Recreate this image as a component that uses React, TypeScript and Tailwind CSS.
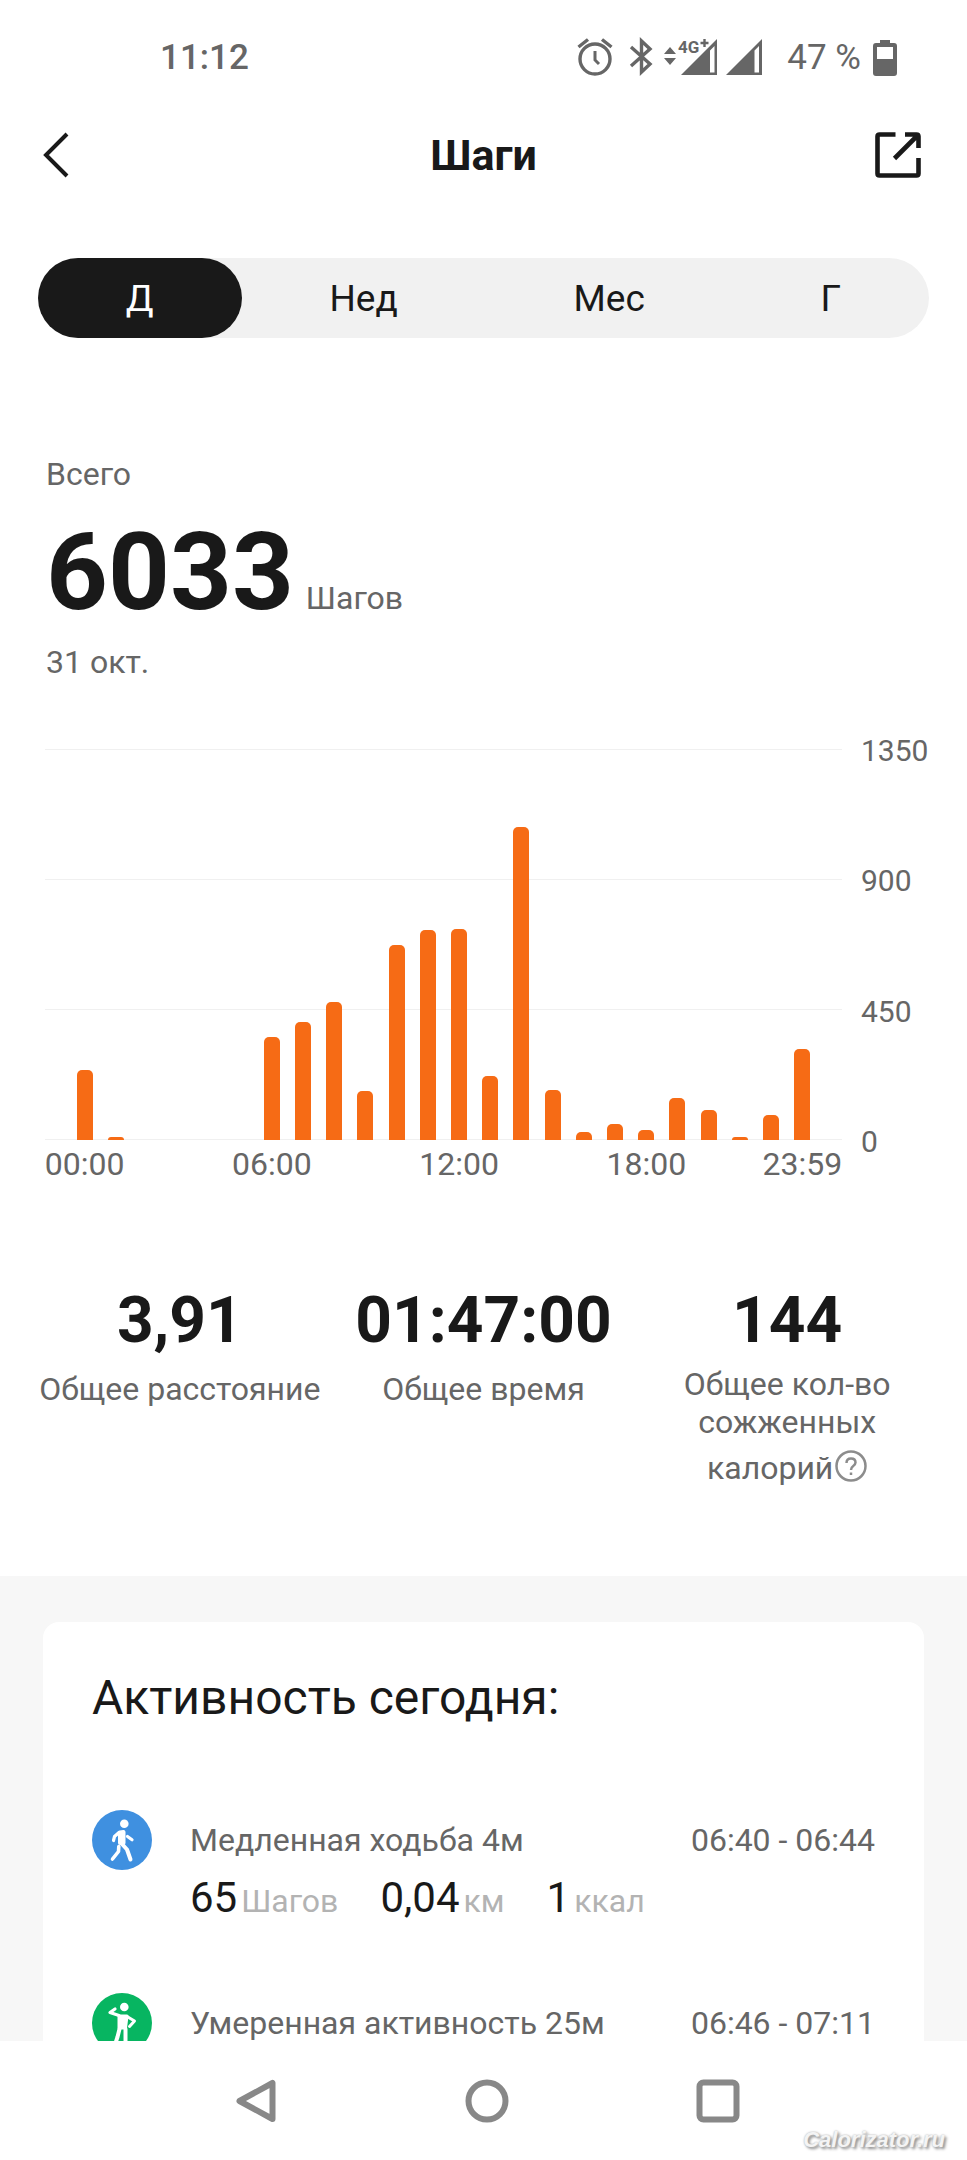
import { useState } from "react";

const steps = [
  242, 10, 0, 0, 0, 0, 357, 409, 478, 170, 672, 724, 727, 222, 1080, 173, 28,
  55, 33, 145, 104, 10, 87, 315,
];

const maxSteps = 1350;

const hourLabels: Record<number, string> = {
  0: "00:00",
  6: "06:00",
  12: "12:00",
  18: "18:00",
  23: "23:59",
};

const periods = ["Д", "Нед", "Мес", "Г"];

const activities = [
  {
    title: "Медленная ходьба 4м",
    time: "06:40 - 06:44",
    icon: <WalkIcon />,
    values: [
      { value: "65", unit: "Шагов" },
      { value: "0,04", unit: "км" },
      { value: "1", unit: "ккал" },
    ],
  },
  {
    title: "Умеренная активность 25м",
    time: "06:46 - 07:11",
    icon: <ActiveIcon />,
    values: [],
  },
];

function WalkIcon() {
  return (
    <svg viewBox="0 0 60 60" className="size-15 shrink-0" fill="none" stroke="#fff" strokeLinecap="round" strokeLinejoin="round">
      <circle cx="30" cy="30" r="30" fill="#3f90e0" stroke="none" />
      <circle cx="32.3" cy="13.7" r="4.3" fill="#fff" stroke="none" />
      <path d="M28 22.5 L31.5 22 L31.5 33 L28 33 Z" fill="#fff" strokeWidth="4" />
      <path d="M27 22.5 L22.5 26.5 L21.5 30.5" strokeWidth="3.2" />
      <path d="M35.5 26.5 L40 29.7" strokeWidth="3.2" />
      <path d="M30 34 L35 39.5 L38.5 49.5" strokeWidth="4" />
      <path d="M26.8 36.5 L26.5 41.5 L20.5 49" strokeWidth="3.6" />
    </svg>
  );
}

function ActiveIcon() {
  return (
    <svg viewBox="0 0 60 60" className="size-15 shrink-0" fill="none" stroke="#fff" strokeLinecap="round" strokeLinejoin="round">
      <circle cx="30" cy="30" r="30" fill="#07b561" stroke="none" />
      <circle cx="32.3" cy="14" r="4.3" fill="#fff" stroke="none" />
      <path d="M23 16 L18 19.5 L27 22.5" strokeWidth="3.2" />
      <path d="M27 23 L35 23 L33.5 35 L27 35 Z" fill="#fff" strokeWidth="3" />
      <path d="M35 23.5 L42.5 28 L37.5 33.5" strokeWidth="3" />
      <path d="M27.5 36 L25.5 44 L22.5 53" strokeWidth="4" />
      <path d="M33.5 36 L33.5 53" strokeWidth="4" />
    </svg>
  );
}

function StatusIcons() {
  return (
    <svg viewBox="0 -10 210 60" className="h-15 w-[210px]" fill="none" stroke="#666">
      {/* alarm */}
      <circle cx="18" cy="21" r="15" strokeWidth="3.4" />
      <path d="M18 13v9l4 4" strokeWidth="3" />
      <path d="M1.5 9 L11 1.5 M25 1.5 L34.5 9" strokeWidth="3.4" />
      {/* bluetooth */}
      <path d="M54 9 L73 26 L64.5 34 V3 L73 11 L54 28" strokeWidth="3.4" />
      {/* data arrows */}
      <path d="M87 16 L93 9 L99 16 Z M87 20 L93 27 L99 20 Z" fill="#666" stroke="none" />
      {/* signal */}
      <path
        d="M104 37 L140 1 V37 Z M133 12.5 V34.5 H137.5 V8 Z"
        fill="#666"
        fillRule="evenodd"
        stroke="none"
      />
      <path
        d="M149 37 L185 1 V37 Z M177.5 12.5 V34.5 H182 V8 Z"
        fill="#666"
        fillRule="evenodd"
        stroke="none"
      />
      <path d="M101 0 H131 V6 L123 15.5 H101 Z" fill="#fff" stroke="none" />
      <text x="101" y="15" fontSize="17" fontWeight="700" fill="#666" stroke="none">
        4G
      </text>
      <path d="M123.5 5 H131.5 M127.5 1 V9" strokeWidth="2.4" />
    </svg>
  );
}

function StatusBar() {
  return (
    <div className="flex h-[116px] shrink-0 items-center justify-between pr-[70px] pl-40 text-[35px] font-medium text-[#666]">
      <span>11:12</span>
      <div className="flex items-center">
        <StatusIcons />
        <span className="font-normal">47 %</span>
        <svg viewBox="0 0 24 36" className="ml-3 h-9 w-6" fill="#666">
          <path d="M7 0H17V3H21Q24 3 24 6V33Q24 36 21 36H3Q0 36 0 33V6Q0 3 3 3H7Z" />
          <rect x="4" y="7" width="16" height="12" fill="#fff" />
        </svg>
      </div>
    </div>
  );
}

function Header() {
  return (
    <header className="flex h-[78px] shrink-0 items-center justify-between px-[42px]">
      <button type="button" aria-label="Назад" className="w-12">
        <svg viewBox="0 0 28 46" className="h-[46px] w-7" fill="none" stroke="#191919" strokeWidth="4">
          <path d="M25 2 L4 23 L25 44" />
        </svg>
      </button>
      <h1 className="text-[43px] font-bold">Шаги</h1>
      <button type="button" aria-label="Поделиться" className="flex w-12 justify-end pr-1">
        <svg viewBox="0 0 46 46" className="size-[46px] shrink-0" fill="none" stroke="#191919" strokeWidth="4.6">
          <path d="M20.5 2.5 H4.5 Q2.5 2.5 2.5 4.5 V41.5 Q2.5 43.5 4.5 43.5 H41.5 Q43.5 43.5 43.5 41.5 V26" />
          <path d="M30 2.5 H41.5 Q43.5 2.5 43.5 4.5 V16 M42.5 3.5 L19.5 26.5" />
        </svg>
      </button>
    </header>
  );
}

function StepsChart() {
  return (
    <div className="mt-[63px] flex pl-[45px]">
      <div className="flex-1">
        <div className="relative h-[391px]">
          <div className="flex h-full flex-col justify-between">
            {[0, 1, 2, 3].map((line) => (
              <div key={line} className="h-px bg-[#f0f0f0]" />
            ))}
          </div>
          <div className="absolute inset-0 flex items-end px-6">
            {steps.map((value, hour) => (
              <div key={hour} className="flex h-full flex-1 items-end justify-center">
                <div
                  className="w-4 rounded-t-[5px] bg-[#f66b15]"
                  style={{ height: `${(value / maxSteps) * 100}%` }}
                />
              </div>
            ))}
          </div>
        </div>
        <div className="flex h-12 px-6 text-[32px] text-[#666]">
          {steps.map((_, hour) => (
            <div key={hour} className="flex w-0 flex-1 justify-center">
              <span>{hourLabels[hour]}</span>
            </div>
          ))}
        </div>
      </div>
      <div className="-mt-3.5 flex h-[423px] w-[125px] flex-col justify-between pl-[19px] text-[30px] leading-8 text-[#666]">
        <span>1350</span>
        <span>900</span>
        <span>450</span>
        <span>0</span>
      </div>
    </div>
  );
}

function Totals() {
  return (
    <div className="mt-[93px] grid grid-cols-3 px-7 text-center">
      <div>
        <p className="text-[64px] leading-20 font-bold">3,91</p>
        <p className="mt-2 text-[32px] leading-10 whitespace-nowrap text-[#666]">Общее расстояние</p>
      </div>
      <div>
        <p className="text-[64px] leading-20 font-bold">01:47:00</p>
        <p className="mt-2 text-[32px] leading-10 text-[#666]">Общее время</p>
      </div>
      <div>
        <p className="text-[64px] leading-20 font-bold">144</p>
        <div className="mt-1 text-[32px] leading-[38px] text-[#666]">
          <p>Общее кол-во сожженных</p>
          <div className="flex items-center justify-center pt-1">
            <span className="pt-1">калорий</span>
            <button type="button" aria-label="Подробнее" className="ml-0.5">
              <svg viewBox="0 0 32 32" className="size-8" fill="none" stroke="#8c8c8c" strokeWidth="2.5">
                <circle cx="16" cy="16" r="14.5" />
                <path d="M11.5 13 Q11.5 8.5 16 8.5 Q20.5 8.5 20.5 12.5 Q20.5 14.5 18 16.2 Q16 17.5 16 20" />
                <path d="M16 22.5 V25" />
              </svg>
            </button>
          </div>
        </div>
      </div>
    </div>
  );
}

function ActivityList() {
  return (
    <section className="mt-[89px] bg-[#f7f7f7] px-[43px] pt-[46px]">
      <div className="rounded-2xl bg-white px-[49px] pt-12">
        <h2 className="text-[48px] leading-14">Активность сегодня:</h2>
        <ul className="mt-21">
          {activities.map((item) => (
            <li key={item.title} className="flex h-[183px] items-start">
              {item.icon}
              <div className="ml-[38px] flex-1">
                <div className="flex h-15 items-center justify-between text-[32px] text-[#666]">
                  <span>{item.title}</span>
                  <span>{item.time}</span>
                </div>
                <div className="flex gap-[42px]">
                  {item.values.map((v) => (
                    <p key={v.unit} className="flex items-baseline gap-1">
                      <span className="text-[42px] leading-14">{v.value}</span>
                      <span className="text-[32px] text-[#b3b3b3]">{v.unit}</span>
                    </p>
                  ))}
                </div>
              </div>
            </li>
          ))}
        </ul>
      </div>
    </section>
  );
}

function NavBar() {
  return (
    <nav className="relative flex h-[119px] shrink-0 items-center justify-between bg-white pr-[227px] pl-[234px]">
      <button type="button" aria-label="Назад">
        <svg viewBox="0 0 44 44" className="size-11" fill="none" stroke="#888" strokeWidth="6" strokeLinejoin="round">
          <path d="M5.5 22 L38.5 4 V40 Z" />
        </svg>
      </button>
      <button type="button" aria-label="Домой">
        <svg viewBox="0 0 44 44" className="size-11" fill="none" stroke="#888" strokeWidth="6">
          <circle cx="22" cy="22" r="18.5" />
        </svg>
      </button>
      <button type="button" aria-label="Недавние">
        <svg viewBox="0 0 44 44" className="size-11" fill="none" stroke="#888" strokeWidth="6">
          <rect x="3.5" y="3.5" width="37" height="37" rx="4" />
        </svg>
      </button>
      <span className="absolute right-[22px] bottom-1 font-['Liberation_Sans',sans-serif] text-[22px] font-bold text-[#f4f4f4] italic [text-shadow:0_0_2px_#aaa,2px_2px_3px_#888]">
        Calorizator.ru
      </span>
    </nav>
  );
}

export default function App() {
  const [period, setPeriod] = useState("Д");

  return (
    <div className="flex h-screen flex-col bg-white font-[Roboto,sans-serif] text-[#191919]">
      <StatusBar />
      <Header />

      <main className="flex-1 overflow-y-auto [scrollbar-width:none]">
        {/* PERIOD */}
        <div className="mx-[38px] mt-16 flex h-20 rounded-full bg-[#f1f1f1]">
          {periods.map((p) => (
            <button
              key={p}
              type="button"
              onClick={() => setPeriod(p)}
              className={`flex-auto rounded-full pt-0.5 text-[37px] ${
                period === p ? "bg-[#191919] text-white" : ""
              }`}
            >
              {p}
            </button>
          ))}
        </div>

        {/* SUMMARY */}
        <div className="mt-28 px-[46px] text-[32px] leading-12 text-[#666]">
          <p>Всего</p>
          <p className="mt-[18px] flex items-baseline gap-3">
            <span className="text-[108px] leading-[112px] font-bold text-[#191919]">6033</span>
            <span>Шагов</span>
          </p>
          <p className="mt-2.5">31 окт.</p>
        </div>

        <StepsChart />
        <Totals />
        <ActivityList />
      </main>

      <NavBar />
    </div>
  );
}
